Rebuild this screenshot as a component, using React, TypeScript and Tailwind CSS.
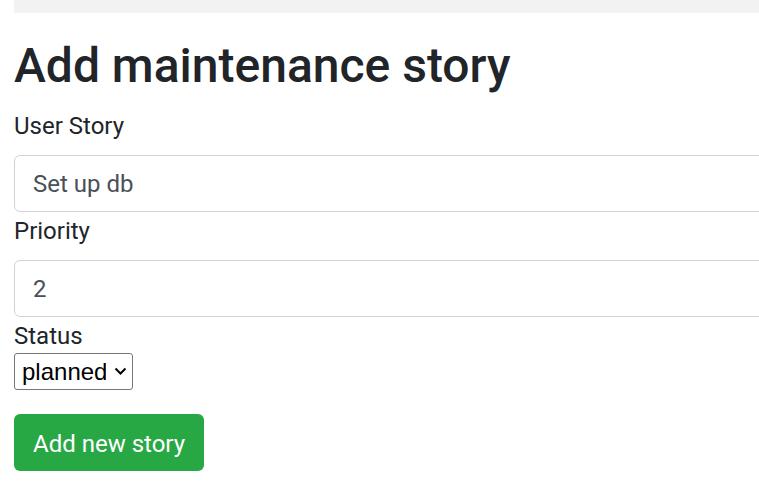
export default function App() {
  return (
    <div className="min-h-screen bg-white overflow-hidden" style={{ fontFamily: 'Roboto, "Liberation Sans", sans-serif' }}>
      <div className="ml-[14px] h-[13px] bg-[#f2f2f2]" />
      <div className="pl-[14px] text-[#212529]">
        <h1 className="mt-[24px] mb-[12px] text-[48px] leading-[1.2] font-medium">Add maintenance story</h1>
        <form className="w-[800px]">
          <label className="block text-[24px] pt-[2px] leading-[34px] mb-[12px]">User Story</label>
          <input
            className="block w-full h-[57px] px-[18px] pt-[2px] text-[24px] text-[#495057] border border-[#ced4da] rounded-[6px] outline-none"
            defaultValue="Set up db"
          />
          <label className="block text-[24px] pt-[2px] leading-[34px] mb-[12px]">Priority</label>
          <input
            className="block w-full h-[57px] px-[18px] pt-[2px] text-[24px] text-[#495057] border border-[#ced4da] rounded-[6px] outline-none"
            defaultValue="2"
          />
          <label className="block text-[24px] pt-[2px] leading-[34px]">Status</label>
          <div className="relative inline-block align-top">
            <select
              className="block appearance-none w-[119px] h-[37px] pl-[7px] pr-[26px] text-[24px] text-black border border-[#767676] rounded-[3px] bg-white"
              style={{ fontFamily: '"Liberation Sans", Arial, sans-serif' }}
              defaultValue="planned"
            >
              <option value="planned">planned</option>
              <option value="started">started</option>
              <option value="done">done</option>
            </select>
            <svg
              className="pointer-events-none absolute left-[100px] top-[14px]"
              width="13"
              height="9"
              viewBox="0 0 13 9"
              fill="none"
            >
              <path d="M1.5 1.5 L6.5 6.5 L11.5 1.5" stroke="#000" strokeWidth="2" />
            </svg>
          </div>
          <div>
            <button
              type="button"
              className="mt-[24px] h-[57px] px-[19px] pt-[3px] bg-[#28a745] text-white text-[24px] rounded-[6px]"
            >
              Add new story
            </button>
          </div>
        </form>
      </div>
    </div>
  )
}
